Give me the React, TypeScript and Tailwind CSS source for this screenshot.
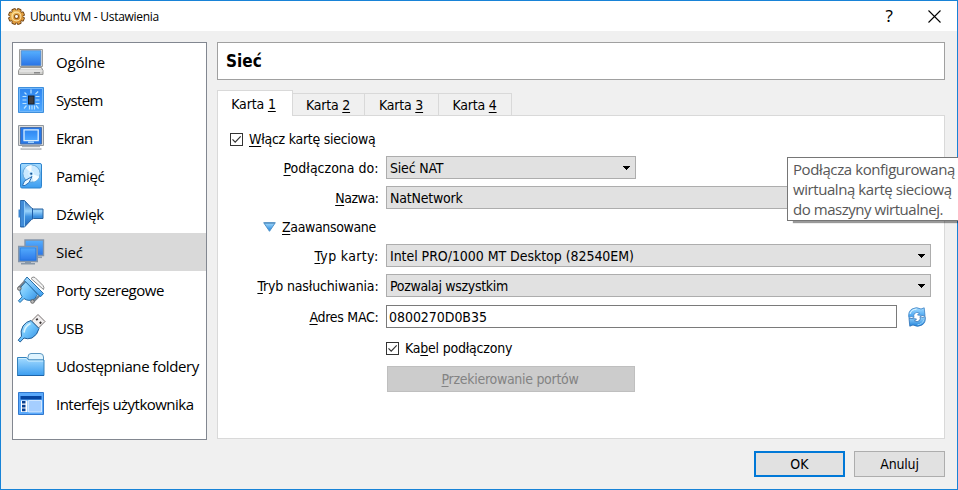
import React from 'react';

function GearIcon() {
  const teeth = [0, 45, 90, 135, 180, 225, 270, 315];
  return (
    <svg className="h-[17px] w-[17px] shrink-0" viewBox="0 0 17 17">
      <defs>
        <linearGradient id="gear" x1="0" y1="0" x2="1" y2="1">
          <stop offset="0" stopColor="#f6cd6e" />
          <stop offset="1" stopColor="#cf7a1c" />
        </linearGradient>
      </defs>
      {teeth.map((a) => (
        <rect key={a} x="6.5" y="0.5" width="4" height="4" rx="1" fill="#e3a344" stroke="#6d3f10" strokeWidth="0.9" transform={`rotate(${a + 22.5} 8.5 8.5)`} />
      ))}
      <circle cx="8.5" cy="8.5" r="6.2" fill="url(#gear)" />
      <circle cx="8.5" cy="8.5" r="4.4" fill="none" stroke="#fbe3a4" strokeWidth="1.1" />
      <circle cx="8.5" cy="8.5" r="2" fill="#fff" stroke="#8c5617" strokeWidth="1.1" />
    </svg>
  );
}

function Defs() {
  return (
    <svg className="absolute h-0 w-0">
      <defs>
        <linearGradient id="screen" x1="0" y1="0" x2="0" y2="1">
          <stop offset="0" stopColor="#2f86ee" />
          <stop offset="0.5" stopColor="#3b95fa" />
          <stop offset="1" stopColor="#4fa9ff" />
        </linearGradient>
        <linearGradient id="monitor" x1="0" y1="0" x2="0" y2="1">
          <stop offset="0" stopColor="#56b0ff" />
          <stop offset="1" stopColor="#2a74e6" />
        </linearGradient>
        <linearGradient id="light" x1="0" y1="0" x2="0" y2="1">
          <stop offset="0" stopColor="#a5dcff" />
          <stop offset="1" stopColor="#3b9df0" />
        </linearGradient>
        <linearGradient id="arrow" x1="0" y1="0" x2="0" y2="1">
          <stop offset="0" stopColor="#a5dcff" />
          <stop offset="1" stopColor="#1f82dc" />
        </linearGradient>
        <linearGradient id="diag" x1="0" y1="0" x2="1" y2="1">
          <stop offset="0" stopColor="#b9e8ff" />
          <stop offset="0.5" stopColor="#6cc2fb" />
          <stop offset="1" stopColor="#2f88de" />
        </linearGradient>
        <linearGradient id="horn" x1="0" y1="0" x2="0" y2="1">
          <stop offset="0" stopColor="#2a6fc0" />
          <stop offset="0.4" stopColor="#9ad3fb" />
          <stop offset="0.6" stopColor="#3f93e2" />
          <stop offset="1" stopColor="#1f62b4" />
        </linearGradient>
      </defs>
    </svg>
  );
}

const icons: Record<string, React.ReactNode> = {
  general: (
    <>
      <path d="M1.5 .5h23v17h-23z" fill="#e1e1df" stroke="#9c9c9a" />
      <path d="M3.2 1.7h19.6v14.8H3.2z" fill="url(#monitor)" stroke="#4b7ec0" strokeWidth="0.7" />
      <path d="M2.5 18.5h21l1.5 3v4H0.5v-4z" fill="#d2d2d0" stroke="#979795" />
      <path d="M3 19.7h20M1.5 22h23" stroke="#f3f3f3" />
      <path d="M16 23.8h6" stroke="#777" strokeWidth="1.2" />
    </>
  ),
  system: (
    <>
      <path d="M.5 .5h25v25H.5z" fill="#4b9ff8" stroke="#3f8fdc" />
      <path d="M1.5 1.5h23v23h-23z" fill="url(#screen)" stroke="#72b8fb" />
      <rect x="10.500" y="9" width="5.500" height="8" fill="#3e3e42" stroke="#17202c" />
      <path d="M13 2.500v4M17.500 7l2.700-2.500M8.500 7.500L6.500 5.500M4.500 9.500h4M4.500 13h4M4.500 16.500h4M17.500 9.500h4M17.500 13h4M17.500 16.500h4M8.500 18.500L6 21.500M18 18.500l2.500 3M11.500 18.500v4M14 18.500v4M16.500 18.500v4" stroke="#b8e2ff" strokeWidth="1.2" />
    </>
  ),
  display: (
    <>
      <path d="M.5 .5h25v20H.5z" fill="#dcdcda" stroke="#92989e" />
      <path d="M2.5 2.5h21v16.5h-21z" fill="#2878e6" stroke="#4770af" />
      <path d="M6 4.8h14.2v10.8H6z" fill="url(#screen)" stroke="#d9eeff" strokeWidth="1.3" />
      <path d="M10 17.2h6" stroke="#9dd2ff" strokeWidth="1.6" />
      <path d="M4 21.5h18M2.5 24h21" stroke="#aaaeb2" strokeWidth="1.3" />
      <path d="M4 22.8h18" stroke="#eee" />
    </>
  ),
  storage: (
    <>
      <rect x="2.500" y=".5" width="21" height="24.500" rx="1.5" fill="url(#light)" stroke="#2d83cd" />
      <circle cx="13.500" cy="10.5" r="8.6" fill="#cbeaff" stroke="#5799cd" strokeWidth="0.8" />
      <path d="M13.500 10.5L7.500 4.5A8.4 8.4 0 0 1 13.500 2zM13.500 10.5l7.700 3.2A8.4 8.4 0 0 1 15.500 18.7z" fill="#f4fcff" />
      <circle cx="13.2" cy="10.7" r="2.4" fill="#a5d8fb" stroke="#eefaff" />
      <circle cx="13.2" cy="10.7" r="1" fill="#174f8a" />
      <path d="M4.500 22.5l2-4.500 7.500-4.500-3 6-4 3z" fill="#eaf7ff" stroke="#2c72b8" />
    </>
  ),
  audio: (
    <>
      <path d="M2.5 -.5h4l7 7.5 2 1h9.500v9.500h-9.500l-2 1-7 7.500h-4z" fill="url(#horn)" stroke="#28629f" />
      <path d="M14.5 8v10" fill="none" stroke="#1f5da8" />
      <path d="M2.500 0h4v25.300h-4z" fill="#3f8bd8" />
      <path d="M6.500 .5v25" stroke="#8fccf8" />
      <path d="M1.500 8.500v8" stroke="#3a85d0" strokeWidth="2" />
    </>
  ),
  network: (
    <>
      <path d="M7 1h18.500v15.500H7z" fill="url(#monitor)" stroke="#8294aa" strokeWidth="1.400" />
      <path d="M19 18.300h5" stroke="#8d9baa" strokeWidth="1.600" />
      <path d="M.8 7.500h18.400v15H.8z" fill="url(#monitor)" stroke="#8294aa" strokeWidth="1.600" />
      <path d="M2.300 9h15.400v12H2.300z" fill="none" stroke="#2476dd" strokeWidth="0.600" />
      <path d="M3 24.700h14M7 23.500h6" stroke="#8797a8" strokeWidth="1.600" />
    </>
  ),
  serial: (
    <g transform="translate(-.5 -1)">
      <path d="M13.5 2.5q2-2.500 4-1l8 8q1.500 2 .5 4z" fill="#f3f3f3" stroke="#8b8b8b" />
      <path d="M9 3.500L1.500 11.500M24 17.500l-8 8" stroke="#77828e" strokeWidth="2.400" />
      <path d="M8.500 5.500L20 18.500l-3 4.500q-6 3-10.500-.5l-4 4-1.600-1.700 3.700-4Q1 15 3.500 11z" fill="url(#diag)" stroke="#256fa9" />
      <path d="M9.500 1L26 17.500l-3 3.300L6.800 4.500z" fill="url(#light)" stroke="#256fa9" />
      <circle cx="1.800" cy="12.500" r="1.800" fill="#bbb" stroke="#666" />
      <circle cx="15" cy="25.500" r="1.800" fill="#bbb" stroke="#666" />
    </g>
  ),
  usb: (
    <g transform="translate(-.5 -1)">
      <path d="M20.500 0.500L27.500 7.500l-6.500 6.500-7-7z" fill="#f1eeee" stroke="#77706f" />
      <path d="M18.700 6.200l1.500-1.500M22.200 9.500l1.500-1.500" stroke="#3a3434" strokeWidth="1.800" />
      <path d="M13.500 6.500l8 8q-1.500 6.500-7 9.500-4.500 1.500-8 0l-3.800 4-2-1.800 3.300-4Q2.500 17 5.500 12 8.500 7.500 13.500 6.500z" fill="url(#diag)" stroke="#235f98" />
      <path d="M6.500 18.500Q7.500 12 13 9.500" fill="none" stroke="#d9f4ff" strokeWidth="1.700" />
    </g>
  ),
  folder: (
    <>
      <path d="M10 4q0-3.500 3-3.500h9q3.500 0 3.500 3.500v3H10z" fill="#dff4ff" stroke="#5b96c0" />
      <path d="M-.5 4.500h9l2 2.500h15.500v15.500H-.5z" fill="url(#light)" stroke="#3482bd" />
      <path d="M.5 5.500h7.700l2 2.500h15" fill="none" stroke="#d1f0ff" />
      <path d="M-.5 22.500h26.500" stroke="#1d64aa" />
    </>
  ),
  ui: (
    <>
      <path d="M.5 1.500h25v22H.5z" fill="#5aa9fb" stroke="#3178ce" />
      <path d="M2.500 5h21v3.500h-21z" fill="#0645a0" />
      <path d="M3 9.500h6.500v11.500H3z" fill="#fff" />
      <path d="M10.500 9.500h13v11.500h-13z" fill="#a5ceff" stroke="#e3f1ff" strokeWidth=".8" />
      <path d="M4 10h3.500v2.600H4zM4 13.800h3.500v2.600H4zM4 17.600h3.500v2.600H4z" fill="#073f91" />
    </>
  ),
};

const items = [
  { icon: 'general', label: 'Ogólne', track: 'tracking-[-0.2px]' },
  { icon: 'system', label: 'System', track: 'tracking-[-0.65px]' },
  { icon: 'display', label: 'Ekran', track: 'tracking-[-0.7px]' },
  { icon: 'storage', label: 'Pamięć', track: 'tracking-[-0.4px]' },
  { icon: 'audio', label: 'Dźwięk', track: 'tracking-[-0.3px]' },
  { icon: 'network', label: 'Sieć', track: 'tracking-[-0.2px]', active: true },
  { icon: 'serial', label: 'Porty szeregowe', track: 'tracking-[-0.5px]' },
  { icon: 'usb', label: 'USB', track: 'tracking-[-0.6px]' },
  { icon: 'folder', label: 'Udostępniane foldery', track: 'tracking-[-0.42px]' },
  { icon: 'ui', label: 'Interfejs użytkownika', track: 'tracking-[-0.52px]' },
];

/* Underlined mnemonic letter */
function U({ children }: { children: React.ReactNode }) {
  return <span className="underline decoration-1 underline-offset-2 [text-decoration-skip-ink:none]">{children}</span>;
}

function Label({ children, track }: { children: React.ReactNode; track: string }) {
  return <div className={`w-[160.5px] shrink-0 text-right whitespace-nowrap ${track}`}>{children}</div>;
}

function Combo({ text, width, track }: { text: string; width: string; track: string }) {
  return (
    <div className={`flex h-[23px] items-center justify-between border border-[#adadad] bg-[#e1e1e1] pr-[5px] pl-[3px] ${width}`}>
      <span className={`whitespace-nowrap ${track}`}>{text}</span>
      <svg className="h-1 w-[7px]" viewBox="0 0 7 4" shapeRendering="crispEdges">
        <path d="M0 0h7v1H0zM1 1h5v1H1zM2 2h3v1H2zM3 3h1v1H3z" />
      </svg>
    </div>
  );
}

function Check() {
  return (
    <span className="flex h-[13px] w-[13px] shrink-0 items-center justify-center border border-[#333] bg-white">
      <svg className="h-[11px] w-[11px]" viewBox="0 0 11 11">
        <path d="M1.500 5.300l2.700 2.900L9.700 2.400" fill="none" stroke="#333" strokeWidth="1.200" />
      </svg>
    </span>
  );
}

function RefreshIcon() {
  return (
    <svg className="h-5 w-[18px]" viewBox="0 0 18 20">
      <path d="M.8 10.500Q0 4.500 4 2 8.500-.7 13 2L16.200 .8 17 8.800 9.500 8l2-2Q8.500 4.500 6.500 6.500 5.200 8 6 10.500 3 8.500 .8 10.500z" fill="url(#light)" stroke="#3a80c4" strokeWidth=".8" />
      <path d="M17.200 9.500Q18 15.500 14 18 9.500 20.700 5 18L1.800 19.200 1 11.200 8.500 12l-2 2Q9.500 15.500 11.500 13.500 12.800 12 12 9.500 15 11.500 17.200 9.500z" fill="url(#arrow)" stroke="#2a6fb5" strokeWidth=".8" />
      <path d="M2 7Q3.500 2.200 8.500 2.200" fill="none" stroke="#e2f6ff" />
      <path d="M15.800 13Q14 17.500 9.500 17.800" fill="none" stroke="#9ad6fb" />
    </svg>
  );
}

function Tab({ n, width }: { n: number; width: string }) {
  return (
    <div className={`flex h-[22px] items-center justify-center border-t border-r border-[#d9d9d9] bg-[#f0f0f0] pr-px tracking-[-0.2px] ${width}`}>
      <span>Karta <U>{n}</U></span>
    </div>
  );
}

export default function App() {
  return (
    <div className="relative h-[490px] w-[958px] overflow-hidden font-['DejaVu_Sans_Condensed','DejaVu_Sans',sans-serif] text-[14px] leading-5 text-black">
      <Defs />
      <div className="flex h-[490px] flex-col border border-[#1883d7] bg-[#f0f0f0]">
        <header className="flex h-[30px] shrink-0 items-center bg-white pl-[7px] font-['Open_Sans',sans-serif]">
          <GearIcon />
          <span className="ml-[5px] pt-px text-[12px] tracking-[-0.28px]">Ubuntu VM - Ustawienia</span>
          <span className="mr-[35px] ml-auto font-['Noto_Sans',sans-serif] text-[17px]">?</span>
          <svg className="mr-[16px] h-[13px] w-[13px]" viewBox="0 0 13 13">
            <path d="M.5 .5l12 12M12.500 .5l-12 12" stroke="#000" strokeWidth="1.100" />
          </svg>
        </header>

        <div className="flex h-[408px] shrink-0 gap-[10px] pt-[11px] pl-[11px]">
          <nav className="h-[398px] w-[195px] shrink-0 border border-[#828790] bg-white font-['Open_Sans',sans-serif] text-[15px]">
            {items.map((it) => (
              <div key={it.label} className={`flex h-[38px] items-center pl-[5px] ${it.active ? 'bg-[#d9d9d9]' : ''}`}>
                <svg className="h-[26px] w-[27px] shrink-0 overflow-visible" viewBox="0 0 27 26">{icons[it.icon]}</svg>
                <span className={`ml-[11px] whitespace-nowrap ${it.track}`}>{it.label}</span>
              </div>
            ))}
          </nav>

          <main className="flex w-[728px] flex-col">
            <h1 className="flex h-[38px] shrink-0 items-center border border-[#a0a0a0] bg-white pl-2 text-[17px] font-bold">Sieć</h1>

            <div className="z-10 mt-[10px] flex h-[25px] shrink-0 items-end">
              <div className="mb-[-1px] flex h-[26px] w-[76px] items-center justify-center border border-b-0 border-[#d9d9d9] bg-white pr-[3px] tracking-[-0.15px]">
                <span>Karta <U>1</U></span>
              </div>
              <Tab n={2} width="w-[72px]" />
              <Tab n={3} width="w-[74px]" />
              <Tab n={4} width="w-[73px]" />
            </div>

            <section className="flex h-[324px] shrink-0 flex-col border border-[#d9d9d9] bg-white">
              <div className="mt-[12px] ml-3 flex h-[22px] items-center gap-[6px]">
                <Check />
                <span className="tracking-[-0.27px]"><U>W</U>łącz kartę sieciową</span>
              </div>
              <div className="mt-[6px] flex h-[23px] items-center gap-[7.500px]">
                <Label track="tracking-[0px]"><U>P</U>odłączona do:</Label>
                <Combo text="Sieć NAT" width="w-[250px]" track="tracking-[-0.2px]" />
              </div>
              <div className="mt-[7px] flex h-[23px] items-center gap-[7.500px]">
                <Label track="tracking-[-0.45px]"><U>N</U>azwa:</Label>
                <Combo text="NatNetwork" width="w-[545px]" track="tracking-[-0.2px]" />
              </div>
              <div className="mt-[7px] ml-[45px] flex h-[22px] items-center">
                <svg className="h-[10px] w-[13px]" viewBox="0 0 13 10">
                  <path d="M.7 .7h11.600L6.500 9.300z" fill="url(#arrow)" stroke="#4f91c8" />
                  <path d="M1.500 1.200h10" stroke="#3c77a8" strokeWidth=".7" />
                </svg>
                <span className="pl-[6px] tracking-[-0.35px]"><U>Z</U>aawansowane</span>
              </div>
              <div className="mt-[6px] flex h-[23px] items-center gap-[7.500px]">
                <Label track="tracking-[0.35px]"><U>T</U>yp karty:</Label>
                <Combo text="Intel PRO/1000 MT Desktop (82540EM)" width="w-[545px]" track="tracking-[-0.05px]" />
              </div>
              <div className="mt-[7px] flex h-[23px] items-center gap-[7.500px]">
                <Label track="tracking-[-0.15px]"><U>T</U>ryb nasłuchiwania:</Label>
                <Combo text="Pozwalaj wszystkim" width="w-[545px]" track="tracking-[-0.32px]" />
              </div>
              <div className="mt-[8px] flex h-[23px] items-center gap-[7.500px]">
                <Label track="tracking-[-0.28px]"><U>A</U>dres MAC:</Label>
                <div className="flex h-[23px] w-[511px] items-center border border-[#7a7a7a] bg-white pl-[2px] tracking-[-0.05px]">0800270D0B35</div>
                <div className="ml-[3px]"><RefreshIcon /></div>
              </div>
              <div className="mt-[9px] ml-[168px] flex h-[22px] items-center gap-[6px]">
                <Check />
                <span className="tracking-[-0.22px]">Ka<U>b</U>el podłączony</span>
              </div>
              <button className="mt-[7px] ml-[169px] h-[26px] w-[248px] border border-[#bfbfbf] bg-[#cccccc] pr-0.5 tracking-[-0.29px] text-[#838383]"><U>P</U>rzekierowanie portów</button>
            </section>
          </main>
        </div>

        <footer className="mt-[12px] flex justify-end gap-[9px] pr-[12px]">
          <button className="h-[26px] w-[91px] border-2 border-[#0078d7] bg-[#e1e1e1] tracking-[0.2px]">OK</button>
          <button className="h-[26px] w-[91px] border border-[#adadad] bg-[#e1e1e1] tracking-[-0.2px]">Anuluj</button>
        </footer>
      </div>

      <aside className="absolute top-[157px] left-[787px] z-20 h-[64px] w-[180px] border border-[#767676] bg-white pt-px pl-[5px] font-['Open_Sans',sans-serif] text-[15px] leading-5 whitespace-nowrap text-[#575757] shadow-[5px_3px_1px_-1px_rgba(0,0,0,0.4)]">
        <div className="tracking-[-0.4px]">Podłącza konfigurowaną</div>
        <div className="tracking-[-0.43px]">wirtualną kartę sieciową</div>
        <div className="tracking-[-0.46px]">do maszyny wirtualnej.</div>
      </aside>
    </div>
  );
}
